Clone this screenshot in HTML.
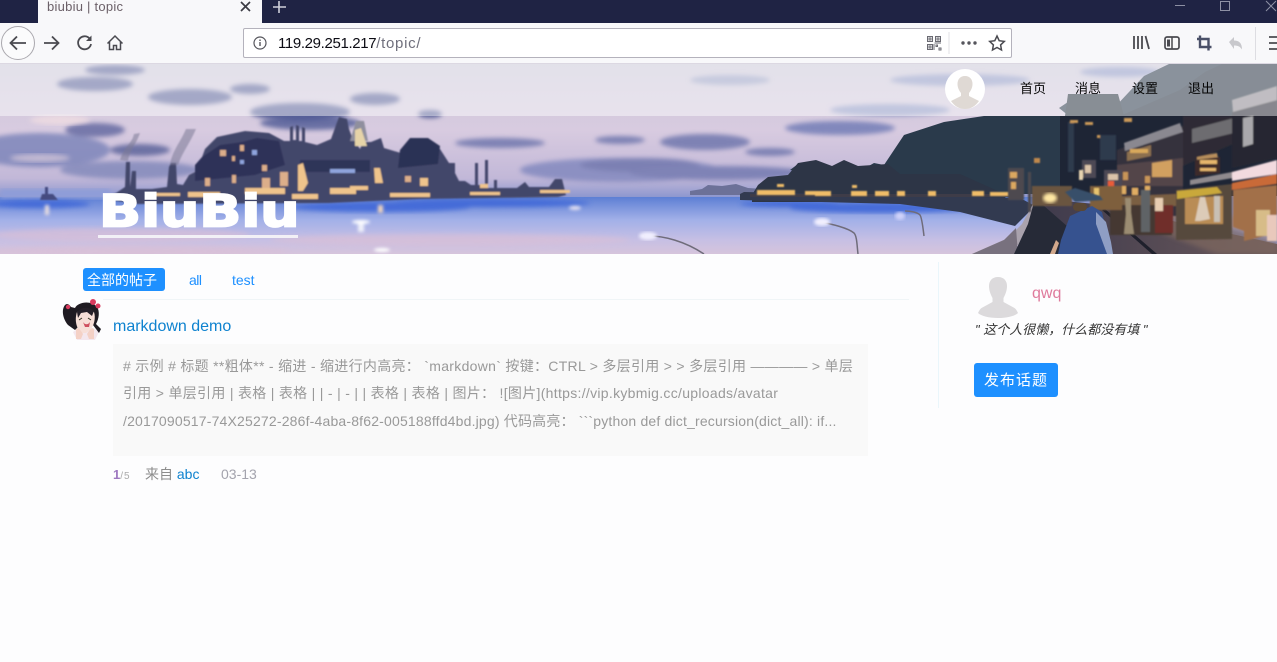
<!DOCTYPE html>
<html><head><meta charset="utf-8"><title>biubiu | topic</title>
<style>
*{margin:0;padding:0;box-sizing:border-box}
html,body{width:1277px;height:662px;overflow:hidden;background:#fdfdfe;font-family:"Liberation Sans","Noto Sans CJK SC",sans-serif}
.a{position:absolute;white-space:nowrap}
svg{position:absolute;overflow:visible}
svg.ban{overflow:hidden}
</style></head><body>
<!-- browser chrome -->
<div class="a" style="left:0;top:0;width:1277px;height:23px;background:#1f2344"></div>
<div class="a" style="left:38px;top:0;width:224px;height:23px;background:#f8f8fa"></div>
<div class="a" style="left:47px;top:-1px;font-size:13px;line-height:16px;color:#6b6068;letter-spacing:.25px">biubiu | topic</div>
<svg style="left:0;top:0" width="1277" height="64">
<path d="M241 2l9 9M250 2l-9 9" stroke="#3c3c44" stroke-width="1.7" fill="none"/>
<path d="M279 1v12M273 7h13" stroke="#cfd0da" stroke-width="1.6" fill="none"/>
<path d="M1175 5.500h10" stroke="#8d90a4" fill="none"/>
<rect x="1220.500" y="1.500" width="9" height="9" stroke="#8d90a4" fill="none"/>
<path d="M1266 1l10 10M1276 1l-10 10" stroke="#8d90a4" fill="none"/>
</svg>
<div class="a" style="left:0;top:23px;width:1277px;height:41px;background:#f8f8fa"></div>
<div class="a" style="left:0;top:63px;width:1277px;height:1px;background:#dcd8e2"></div>
<svg style="left:0;top:0" width="1277" height="64" fill="none">
<circle cx="18" cy="43" r="16.500" fill="#fbfbfc" stroke="#aaa8ae"/>
<path d="M26 43H11M17 36.500L10.500 43l6.500 6.500" stroke="#4a4a50" stroke-width="1.800"/>
<path d="M44 43h14M52 36.500L58.500 43 52 49.500" stroke="#4a4a50" stroke-width="1.800"/>
<path d="M89.500 38.500A6.500 6.500 0 1 0 91 44" stroke="#4a4a50" stroke-width="1.800"/>
<path d="M91.500 35.500v5.500H86z" fill="#4a4a50"/>
<path d="M107.500 43.500L115 36l7.500 7.500M109.500 42v7.500h4v-4h3v4h4V42" stroke="#4a4a50" stroke-width="1.500"/>
</svg>
<div class="a" style="left:243px;top:28px;width:769px;height:30px;background:#fff;border:1px solid #b4b2bc;border-radius:2px"></div>
<svg style="left:0;top:0" width="1277" height="64" fill="none">
<circle cx="260" cy="43" r="6" stroke="#55555c" stroke-width="1.200"/>
<path d="M260 42v4M260 39.500v1.500" stroke="#55555c" stroke-width="1.400"/>
<path d="M927.500 36.500h5v5h-5zM935.500 36.500h5v5h-5zM927.500 44.500h5v5h-5zM936 45h1.500v1.500H936zM939 48h2v2h-2z" stroke="#6a6a72"/>
<path d="M929 38h2v2h-2zM937 38h2v2h-2zM929 46h2v2h-2zM934.500 43h6.500M934 44v6" stroke="#6a6a72"/>
<path d="M949 32v22" stroke="#e2e1e6"/>
<circle cx="963" cy="43" r="1.700" fill="#55555c"/><circle cx="969" cy="43" r="1.700" fill="#55555c"/><circle cx="975" cy="43" r="1.700" fill="#55555c"/>
<path d="M997 36l2.200 4.700 5.100.7-3.700 3.500.9 5.100-4.500-2.500-4.500 2.500.9-5.100-3.700-3.500 5.100-.7z" stroke="#4a4a50" stroke-width="1.500"/>
<path d="M1134 36v13M1138 36v13M1142 36v13M1145.500 36l3.500 13" stroke="#4a4a50" stroke-width="1.800"/>
<rect x="1165" y="37" width="14" height="12" rx="2" stroke="#4a4a50" stroke-width="1.700"/>
<path d="M1172 37v12" stroke="#4a4a50" stroke-width="1.500"/><path d="M1167 39.500h3v7h-3z" fill="#4a4a50"/>
<path d="M1200 35.500V47h11.500M1197 39h11.500v11.500" stroke="#4a5068" stroke-width="2.400"/>
<path d="M1229 42l5-5v3.500c5 0 8 2.500 8 9-2-3-4-4-8-4V49z" fill="#c8c8cc"/>
<path d="M1255.500 27v33" stroke="#dddde2"/>
<path d="M1269 37h8M1269 43h8M1269 49h8" stroke="#4a4a50" stroke-width="1.800"/>
</svg>
<div class="a" style="left:278px;top:34px;font-size:15px;line-height:20px;color:#0c0c14;letter-spacing:-.35px">119.29.251.217<span style="color:#6f6f7c;letter-spacing:.7px">/topic/</span></div>

<!-- banner -->
<svg class="ban" style="left:0;top:64px" width="1277" height="190" viewBox="0 64 1277 190">
<defs>
<linearGradient id="sky" x1="0" y1="0" x2="0" y2="1"><stop offset="0" stop-color="#cbc8d8"/><stop offset=".35" stop-color="#d8cbe0"/><stop offset=".6" stop-color="#c2b8d8"/><stop offset=".7" stop-color="#8d97cf"/><stop offset="1" stop-color="#8d97cf"/></linearGradient>
<linearGradient id="wat" x1="0" y1="0" x2="0" y2="1"><stop offset="0" stop-color="#5d7fd4"/><stop offset=".4" stop-color="#a2b0e8"/><stop offset=".75" stop-color="#c6bfe4"/><stop offset="1" stop-color="#d6c4dc"/></linearGradient>
<linearGradient id="rd" x1="0" y1="0" x2="1" y2="0"><stop offset="0" stop-color="#3e3a4c"/><stop offset="1" stop-color="#6c5a5c"/></linearGradient>
<filter id="b1"><feGaussianBlur stdDeviation=".7"/></filter>
<filter id="b3"><feGaussianBlur stdDeviation="2.500"/></filter>
<filter id="g"><feGaussianBlur stdDeviation="1.500"/></filter>
</defs>
<rect x="0" y="64" width="1277" height="190" fill="url(#sky)"/>
<!-- clouds upper (under overlay) -->
<g filter="url(#b3)" fill="#5a6299">
<ellipse cx="95" cy="84" rx="38" ry="7"/><ellipse cx="190" cy="97" rx="42" ry="8"/><ellipse cx="300" cy="112" rx="50" ry="9"/><ellipse cx="375" cy="99" rx="25" ry="6"/><ellipse cx="250" cy="89" rx="20" ry="5"/><ellipse cx="115" cy="70" rx="30" ry="5"/>
<ellipse cx="430" cy="114" rx="12" ry="4"/>
<ellipse cx="730" cy="80" rx="40" ry="5" fill="#9aa0c4"/><ellipse cx="960" cy="80" rx="70" ry="6" fill="#8f98c4"/><ellipse cx="1120" cy="72" rx="40" ry="5" fill="#8f98c4"/><ellipse cx="890" cy="110" rx="60" ry="6" fill="#8f98c4"/>
</g>
<!-- clouds lower -->
<g filter="url(#b3)" fill="#6a72aa" opacity=".8">
<ellipse cx="310" cy="123" rx="50" ry="7" fill="#4f5a95"/>
<ellipse cx="40" cy="150" rx="70" ry="17" fill="#7982b8"/><ellipse cx="140" cy="150" rx="30" ry="6" fill="#575e97"/>
<ellipse cx="95" cy="130" rx="30" ry="7" fill="#5e659e"/><ellipse cx="130" cy="170" rx="70" ry="9" fill="#8087b9"/>
<ellipse cx="500" cy="143" rx="45" ry="5"/><ellipse cx="620" cy="140" rx="25" ry="4"/><ellipse cx="620" cy="170" rx="100" ry="12" fill="#7f86bd"/>
<ellipse cx="640" cy="165" rx="60" ry="7"/>
<ellipse cx="840" cy="128" rx="55" ry="7" fill="#6d78b4"/><ellipse cx="705" cy="142" rx="45" ry="8"/><ellipse cx="770" cy="152" rx="25" ry="4"/>
<ellipse cx="720" cy="173" rx="90" ry="7" fill="#6e76ae"/>
</g>
<ellipse cx="60" cy="120" rx="30" ry="5" fill="#f3dfe2" opacity=".7" filter="url(#b3)"/>
<ellipse cx="40" cy="158" rx="30" ry="4" fill="#e8d6e0" opacity=".6" filter="url(#b3)"/>
<!-- water -->
<rect x="0" y="197" width="1040" height="57" fill="url(#wat)"/>
<rect x="0" y="189" width="110" height="10" fill="#8f9dd8" filter="url(#b3)"/>
<g filter="url(#b3)" fill="#dabfd6" opacity=".65"><ellipse cx="120" cy="235" rx="130" ry="7"/><ellipse cx="450" cy="240" rx="180" ry="6"/><ellipse cx="140" cy="251" rx="150" ry="5"/></g>
<g filter="url(#b3)" fill="#3f68d8" opacity=".9"><ellipse cx="380" cy="207" rx="90" ry="5"/><ellipse cx="490" cy="203" rx="100" ry="4"/><ellipse cx="880" cy="208" rx="90" ry="5"/><ellipse cx="790" cy="204" rx="50" ry="3"/><ellipse cx="40" cy="204" rx="50" ry="4"/></g>
<!-- city -->
<g filter="url(#b1)">
<g fill="#43466a">
<path d="M110 200v-5l6-2 9-6 1-25h4v25l2-16h4v18h16l15-2 2-20 2-4h5l1 21 6 1 6-10 8-4 8-22 12-12 28-6 24 2 15 8h6v-14l3-1v14h3v-15l3 1v15h3v-14l3 1v14l12 3 14-6 5-14 3-8 8 2 2 10 3 8 8 12 3-7h8l10-4 3 10 10 3 14 4 14-8 18 2 9 14 6 0 0 10 4 8h6l6 4h4v-22h3v22h7v-25h3v28h6v-8h3v8h20l8-6 4 5h20l6-8h7l2 8 2 8-8 2-140 2-90 4-190 1z"/>
</g>
<path d="M120 160c4-14 12-16 14-26l6-1c-4 12-10 16-12 28zM170 165c2-14 10-22 16-36l10 0c-6 14-14 24-18 36z" fill="#7c7a96" opacity=".55"/>
<path d="M195 165l7-8 18-12 22-3 15-4 22 3 6 24-30 10-60 6z" fill="#2e3358"/>
<path d="M400 150l10-12 18 0 12 8-2 18-40 4z" fill="#2c3255"/>
<path d="M350 141l6-20 8 0 4 20z" fill="#8f8f9e"/>
<path d="M300 160h70v12h-70z" fill="#2f3459"/>
<g fill="#efc48c">
<path d="M298 165l5-2 5 20-5 8h-5zM374 168h6l3 15h-8zM420 178h8v8h-8zM330 188h26v6h-26zM188 192h32v5h-32zM245 188h40v6h-40zM292 194h26v5h-26zM390 193h40v4h-40zM470 192h30v3h-30zM150 193h30v3h-30zM350 186h18v4h-18zM480 184h8v4h-8zM540 190h30v3h-30z"/>
<path d="M220 150h6v6h-6zM240 145h4v6h-4zM232 156h3v5h-3zM262 165h5v6h-5zM205 178h5v8h-5zM232 175h4v8h-4zM262 178h8v10h-8zM280 172h8v14h-8zM405 176h6v6h-6z" fill="#dcae8a"/>
<path d="M355 130l6-2 6 18h-12z" fill="#e6d4a8"/>
</g>
<g fill="#8fa4de"><rect x="252" y="150" width="5" height="5"/><rect x="330" y="169" width="25" height="4"/><rect x="240" y="160" width="4" height="4"/></g>
<path d="M40 200l2-6h3v-7h3v7h5l5 6z" fill="#454c80"/>
</g>
<g filter="url(#g)" fill="#fff"><ellipse cx="361" cy="222" rx="9" ry="2"/><rect x="358" y="222" width="6" height="10" opacity=".8"/><ellipse cx="575" cy="208" rx="6" ry="2" fill="#e7e3f2"/><ellipse cx="382" cy="250" rx="8" ry="2"/><rect x="378" y="205" width="5" height="8" fill="#f2d5bd"/><rect x="45" y="205" width="4" height="10" fill="#eadfe0"/></g>
<!-- far right hill -->
<path d="M690 191l12-2 6-4 14 1 14-2 12 4 16 1v6h-74z" fill="#6c7198"/>
<path d="M790 170l8-6 20 3 12 8 30-4 14-8 10 2 20-30 40-13 40-6h85l-10-8 15-10 40 10 30-32 25-12h90v130H960z" fill="#2a3a4b"/>
<path d="M1065 116l3-22 50 0 6 22z" fill="#27323f"/>
<path d="M1060 116h217v80h-217z" fill="#1e2535"/>
<path d="M1120 116l60-26 25-18 17-8h55v52z" fill="#253140"/>
<path d="M752 195l6-10 10-8 20-2 10-12 18-3 16 6 12-6 14 6 30-2 12 10 60 0 40 18 10 10H752z" fill="#2d3546"/>
<!-- seawall -->
<path d="M740 194l4-2 276 6 15 8-20 20-55-14-60-8-160-4z" fill="#323a50"/>
<path d="M750 194h270v3H750z" fill="#3e3c48"/>
<!-- shoreline lights -->
<g filter="url(#b1)" fill="#f0bd68">
<path d="M757 190h10v5h-10zM765 190h18v5h-18zM783 190h12v5h-12zM805 191h14v4h-14zM815 191h16v5h-16zM851 191h16v5h-16zM875 191h14v5h-14zM897 191h8v5h-8zM928 191h8v5h-8zM972 191h12v5h-12zM990 192h22v4h-22zM1010 170h6v7h-6zM1012 181h5v6h-5zM777 184h7v3h-7zM852 185h5v3h-5z"/>
</g>
<!-- wall and road -->
<path d="M972 254l36-16 14-14 12-22 5 2-8 34-30 16z" fill="#a9a2ad"/>
<path d="M972 254l32-14 12-12 2 26z" fill="#78717e"/>
<path d="M1014 254l14-30 6-22 25-3 40 55z" fill="#262a37"/>
<path d="M1035 198l60 6 182 40v10h-178z" fill="url(#rd)"/>
<path d="M1110 206l70 6 97 30v12h-60l-80-30z" fill="#7e675f" opacity=".7" filter="url(#b3)"/>
<path d="M1150 214c40 4 90 14 127 28v-18l-80-14z" fill="#b5845e" opacity=".5" filter="url(#b3)"/>
<path d="M1152 254l-50-44 3-1 52 45z" fill="#1f202c"/>
<!-- buildings -->
<g filter="url(#b1)">
<path d="M1117 150l66-24v90h-66z" fill="#35323e"/>
<path d="M1124 143l56-20 3 9-58 19z" fill="#8a8890"/>
<path d="M1127 152l24-7v11l-24 5z" fill="#8c7050"/><path d="M1130 153h18v-4h-18z" fill="#d8a85c"/>
<path d="M1117 165l66-7v28h-66z" fill="#52454a"/>
<path d="M1152 163l20-3v17h-20z" fill="#d1a060"/><path d="M1123 172h5v8h-5zM1145 176h5v7h-5z" fill="#c89558"/>
<path d="M1120 186h6v8h-6zM1132 188h6v7h-6zM1145 186h5v7h-5z" fill="#e0ad64"/>
<path d="M1104 197l72-3v12h-72z" fill="#7a5e42"/>
<path d="M1110 205h62v30h-62z" fill="#453833"/>
<path d="M1155 205h18v28h-18z" fill="#702f29"/><rect x="1155" y="198" width="8" height="13" fill="#e8cdb1"/>
<path d="M1183 116h50v28l-50 22z" fill="#2d2b34"/>
<path d="M1192 143l42-10v-15l-42 11z" fill="#6d6c70"/>
<path d="M1197 157l20-4 1 5-21 3z" fill="#b78e5c"/>
<path d="M1195 160l25-3v16l-25 3z" fill="#3c2c2c"/><path d="M1200 160h17v4h-17zM1200 168h16v3h-16z" fill="#e5b56c"/>
<path d="M1190 180l42-8 1 6-43 7z" fill="#8f8a8e"/>
<path d="M1176 240v-50l56-6v55z" fill="#57483e"/>
<path d="M1177 191l40-4 5 6-45 6z" fill="#c9a83a"/>
<path d="M1185 198l38-2v28h-38z" fill="#b98c54"/>
<path d="M1232 100l45-14v16l-44 10z" fill="#8d8890"/>
<path d="M1232 112l45-12v58l-45 10z" fill="#262833"/>
<path d="M1243 118l10-2v28l-10 3z" fill="#a9a8ac"/>
<path d="M1232 172l45-12v14l-45 7z" fill="#f2dadf"/>
<path d="M1232 183l45-9v10l-45 6z" fill="#c96a38"/>
<path d="M1233 190l44-5v48l-33 8v-10l-11-4z" fill="#a2704a"/>
<rect x="1256" y="210" width="14" height="26" fill="#d7bc88"/>
<rect x="1267" y="215" width="10" height="26" fill="#e9c9bc"/>
<path d="M1068 122h6v50h-6zM1100 135h16v25h-16z" fill="#2f3a4e"/>
<path d="M1070 120h8v3h-8zM1085 122h8v3h-8zM1124 118h8v4h-8zM1097 135h3v3h-3z" fill="#c99858"/>
<path d="M1082 160h14v18h-14zM1104 170h18v28h-18z" fill="#4d4a55"/>
<path d="M1085 165h6v8h-6zM1108 174h10v6h-10z" fill="#dbc3a9"/>
<rect x="1079" y="170" width="4" height="10" fill="#e8d4b0"/>
<path d="M1008 168h16v32h-16zM1028 172h3v40h-3z" fill="#4e4a50"/>
<path d="M1010 172h7v6h-7zM1011 182h5v7h-5z" fill="#dba860"/><rect x="1034" y="158" width="6" height="5" fill="#c0884d"/>
<path d="M1032 186h40v20h-40z" fill="#6b5540"/>
<path d="M1090 186h32v24h-32z" fill="#7e5f3e"/>
<rect x="1094" y="188" width="5" height="8" fill="#e8c470"/><rect x="1108" y="181" width="6" height="5" fill="#ea5c37"/>
<path d="M1125 198h6v14l3 22h-10l2-20z" fill="#9b8c72"/><rect x="1141" y="190" width="9" height="42" fill="#5e6466"/><path d="M1200 197l5 0 5 22-10 2-5 0z" fill="#dccbb8"/><rect x="1214" y="196" width="6" height="26" fill="#c8c0b4"/>
</g>
<ellipse cx="1050" cy="198" rx="7" ry="5" fill="#ffe7a3" filter="url(#g)"/>
<!-- girl -->
<path d="M1065 192l10-4 25 8 3 4-28 2z" fill="#38506a" filter="url(#b1)"/>
<path d="M1058 254l3-14 9-24 22-10 10 6 5 22 4 20z" fill="#36528f"/>
<path d="M1096 212l10 10 5 20 2 12h-6l-11-30z" fill="#8f9ec4"/>
<rect x="1073" y="203" width="14" height="8" rx="4" fill="#5a4734"/>
<path d="M1050 254l6-14 3 3-4 11z" fill="#d1a88c"/>
<!-- lamps -->
<g fill="none" stroke="#6f6c7a" stroke-width="1.500"><path d="M644 236c20-1 42 6 60 18"/><path d="M820 222c12 2 28 6 34 11 3 3 3 13 4 21"/><path d="M905 211c5 0 12 1 15 4 2 3 3 13 4 21"/></g>
<ellipse cx="648" cy="236" rx="9" ry="4" fill="#f2f0ff" filter="url(#g)"/><ellipse cx="822" cy="222" rx="8" ry="4" fill="#f2f0ff" filter="url(#g)"/><ellipse cx="900" cy="216" rx="5" ry="4" fill="#cfd2fa" filter="url(#g)"/>
<!-- overlay header -->
<rect x="0" y="64" width="1277" height="52" fill="#fff" opacity=".45"/>
</svg>
<div class="a" style="left:99px;top:188px;font-size:48px;font-weight:bold;line-height:52px;color:#fff;font-family:'DejaVu Sans',sans-serif;transform-origin:0 0;transform:scale(1.150,.92);-webkit-text-stroke:2px #fff">BiuBiu</div>
<div class="a" style="left:98px;top:235px;width:200px;height:3px;background:#f2f0f6"></div>
<!-- header right -->
<svg style="left:945px;top:69px" width="40" height="40"><circle cx="20" cy="20" r="20" fill="#fff"/><path d="M20 7c5 0 7.500 3.500 7.500 8 0 4-2 7-3.500 9v3l10 5c-3.500 5-8 8-14 8S9.500 37 6 32l10-5v-3c-1.500-2-3.500-5-3.500-9 0-4.500 2.500-8 7.500-8z" fill="#dfd9d4"/></svg>
<div class="a" style="left:1020px;top:80px;font-size:13px;line-height:18px;color:#050505">首页</div>
<div class="a" style="left:1075px;top:80px;font-size:13px;line-height:18px;color:#050505">消息</div>
<div class="a" style="left:1132px;top:80px;font-size:13px;line-height:18px;color:#050505">设置</div>
<div class="a" style="left:1188px;top:80px;font-size:13px;line-height:18px;color:#050505">退出</div>

<!-- main -->
<div class="a" style="left:83px;top:268px;width:82px;height:23px;background:#1e90ff;border-radius:3px;color:#fff;font-size:14px;line-height:24px;padding-left:4px">全部的帖子</div>
<div class="a" style="left:189px;top:271px;font-size:14px;line-height:18px;color:#1e90ff;letter-spacing:-.5px">all</div>
<div class="a" style="left:232px;top:271px;font-size:14px;line-height:18px;color:#1e90ff">test</div>
<div class="a" style="left:103px;top:299px;width:806px;height:1px;background:#f0f5f7"></div>
<svg style="left:63px;top:298px" width="40" height="44">
<path d="M10 34l4 8h18l4-8-6-4H16z" fill="#f4e7ee"/>
<path d="M12 10c3-6 16-8 22-1 3 4 2 12-1 17l5 5-2 4-6-8H17l-5 5-7-5c-5-6-7-15-3-20 2-2 4-1 6 2z" fill="#1f1b22"/>
<path d="M14 14c4-3 12-4 17 0 2 6 0 14-4 18l-4 3h-4c-5-3-8-12-5-21z" fill="#f7dfd8"/>
<path d="M14 14c4-5 12-6 17-1l-2 5-5-4-6 1-3 5z" fill="#262029"/>
<path d="M20 24c2 3 5 3 7 0l-1 5h-4z" fill="#cf4f5f"/>
<path d="M16 22l3-2M25 20l3 2" stroke="#332" fill="none"/>
<path d="M13 31c2-2 4 0 7 5l-2 5h-5zM31 31c-2-2-4 0-7 5l2 5h5z" fill="#f4d1c6"/>
<circle cx="30" cy="4" r="3" fill="#d93a5e"/><circle cx="35" cy="8" r="2.500" fill="#d93a5e"/><circle cx="5" cy="9" r="2.200" fill="#d93a5e"/>
</svg>
<div class="a" style="left:113px;top:317px;font-size:16px;line-height:20px;color:#0e82cf">markdown demo</div>
<div class="a" style="left:113px;top:344px;width:755px;height:112px;background:#f9f9f9"></div>
<div class="a" style="left:123px;top:352px;font-size:14px;line-height:28px;color:#999;letter-spacing:.3px">
<div style="position:absolute;left:0;top:0"># 示例 # 标题 **粗体** - 缩进 - 缩进行内高亮： &#96;markdown&#96; 按键：CTRL &gt; 多层引用 &gt; &gt; 多层引用 ———— &gt; 单层</div>
<div style="position:absolute;left:0;top:27px">引用 &gt; 单层引用 | 表格 | 表格 | | - | - | | 表格 | 表格 | 图片： ![图片](https://vip.kybmig.cc/uploads/avatar</div>
<div style="position:absolute;left:0;top:55px;letter-spacing:.18px">/2017090517-74X25272-286f-4aba-8f62-005188ffd4bd.jpg) 代码高亮： &#96;&#96;&#96;python def dict_recursion(dict_all): if...</div>
</div>
<div class="a" style="left:113px;top:466px;font-size:13px;line-height:17px;color:#9e78c0;font-weight:bold">1<span style="color:#aaa;font-weight:normal;font-size:10px;letter-spacing:1px">/5</span></div>
<div class="a" style="left:145px;top:465px;font-size:14px;line-height:18px;color:#8c8c8c">来自 <span style="color:#0e82cf">abc</span></div>
<div class="a" style="left:221px;top:465px;font-size:14px;line-height:18px;color:#a3a3ad">03-13</div>
<!-- sidebar -->
<div class="a" style="left:938px;top:262px;width:1px;height:146px;background:#eaf6fb"></div>
<svg style="left:978px;top:276px" width="40" height="42"><path d="M20 1c6 0 9 4 9 9 0 5-2 9-3.500 12v4l11 6c1.500 1 2.500 3 3.500 5-3 3-11 5-20 5S3 40 0 37c1-2 2-4 3.500-5l11-6v-4C13 19 11 15 11 10c0-5 3-9 9-9z" fill="#dcdadc"/></svg>
<div class="a" style="left:1032px;top:284px;font-size:16px;line-height:20px;color:#df7a9c">qwq</div>
<div class="a" style="left:975px;top:321px;font-size:13px;line-height:18px;color:#333;font-style:italic">" 这个人很懒，什么都没有填 "</div>
<div class="a" style="left:974px;top:363px;width:84px;height:34px;background:#1e90ff;border-radius:3px;color:#fff;font-size:15px;line-height:35px;text-align:center;letter-spacing:1px">发布话题</div>
</body></html>
